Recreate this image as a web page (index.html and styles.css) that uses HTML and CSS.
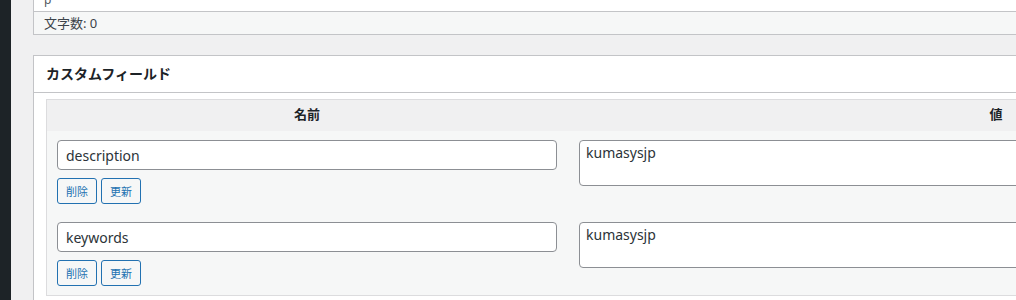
FILE: index.html
```html
<!DOCTYPE html>
<html lang="ja">
<head>
    <meta charset="UTF-8">
    <meta name="viewport" content="width=device-width, initial-scale=1.0">
    <title>カスタムフィールド</title>
    <link rel="stylesheet" href="styles.css">
</head>
<body>
    <div class="admin-menu"></div>
    <div class="content">
        <div class="editor">
            <div class="mce-statusbar">
                <span class="mce-path">p</span>
            </div>
            <div class="status-info">文字数: 0</div>
        </div>

        <div class="postbox">
            <h2 class="postbox-title">カスタムフィールド</h2>
            <div class="inside">
                <table class="list-table">
                    <thead>
                        <tr>
                            <th class="left">名前</th>
                            <th>値</th>
                        </tr>
                    </thead>
                    <tbody>
                        <tr>
                            <td class="left">
                                <input type="text" value="description">
                                <div class="actions">
                                    <button class="button-small">削除</button>
                                    <button class="button-small">更新</button>
                                </div>
                            </td>
                            <td>
                                <textarea rows="2">kumasysjp</textarea>
                            </td>
                        </tr>
                        <tr>
                            <td class="left">
                                <input type="text" value="keywords">
                                <div class="actions">
                                    <button class="button-small">削除</button>
                                    <button class="button-small">更新</button>
                                </div>
                            </td>
                            <td>
                                <textarea rows="2">kumasysjp</textarea>
                            </td>
                        </tr>
                    </tbody>
                </table>
            </div>
        </div>
    </div>
</body>
</html>
```

FILE: styles.css
```css
html, body {
    overflow: hidden;
}

body {
    margin: 0;
    display: flex;
    height: 300px;
    background-color: #f0f0f1;
    font-family: "Noto Sans", "Noto Sans CJK JP", sans-serif;
    font-size: 13px;
    color: #3c434a;
}

.admin-menu {
    flex: 0 0 11px;
    background-color: #1d2327;
}

.content {
    flex: 0 0 auto;
    padding-left: 22px;
}

.editor {
    width: 1404px;
    border-left: 1px solid #c3c4c7;
    border-right: 1px solid #c3c4c7;
    border-bottom: 1px solid #c3c4c7;
    background: white;
}

.mce-statusbar {
    height: 11px;
    overflow: hidden;
    padding-left: 10px;
}

.mce-path {
    display: block;
    margin-top: -9px;
    font-size: 12px;
    line-height: 18px;
    color: #50575e;
}

.status-info {
    height: 22px;
    line-height: 22px;
    padding-left: 10px;
    border-top: 1px solid #c3c4c7;
    background-color: #f6f7f7;
    color: #3c434a;
}

.postbox {
    width: 1404px;
    margin-top: 20px;
    border: 1px solid #c3c4c7;
    background: white;
}

.postbox-title {
    margin: 0;
    padding: 0 12px;
    height: 36px;
    line-height: 36px;
    font-size: 14px;
    font-weight: 600;
    color: #1d2327;
    border-bottom: 1px solid #c3c4c7;
}

.inside {
    padding: 6px 12px 12px;
}

.list-table {
    width: 1380px;
    border: 1px solid #dcdcde;
    border-spacing: 0;
    background-color: #f6f7f7;
}

.list-table th {
    padding: 5px 8px 8px;
    height: 18px;
    line-height: 18px;
    background-color: #f0f0f1;
    font-size: 13px;
    font-weight: 600;
    color: #1d2327;
    text-align: center;
}

.list-table th.left {
    width: 504px;
}

.list-table td {
    vertical-align: top;
    padding: 9px 8px 9px 12px;
}

.list-table td.left {
    padding-left: 10px;
}

input, textarea {
    display: block;
    box-sizing: border-box;
    margin: 0;
    border: 1px solid #8c8f94;
    border-radius: 4px;
    background: white;
    font-family: inherit;
    font-size: 14px;
    color: #2c3338;
}

input {
    width: 500px;
    height: 30px;
    padding: 0 8px;
}

textarea {
    width: 100%;
    height: 46px;
    padding: 2px 6px;
    line-height: 20px;
    resize: none;
}

.actions {
    display: flex;
    gap: 4px;
    margin-top: 8px;
}

.button-small {
    height: 26px;
    padding: 0 8px;
    border: 1px solid #2271b1;
    border-radius: 3px;
    background-color: #f6f7f7;
    color: #2271b1;
    font-family: inherit;
    font-size: 11px;
    cursor: pointer;
}
```
